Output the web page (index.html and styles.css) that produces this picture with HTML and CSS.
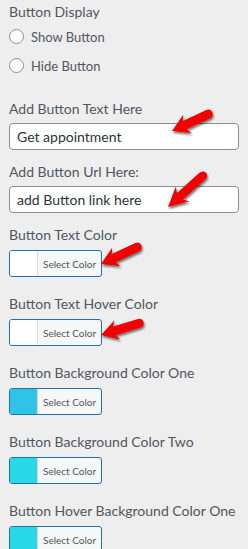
FILE: index.html
```html
<html>
  <head>
    <meta charset="UTF-8" />
    <meta name="viewport" content="width=device-width, initial-scale=1.0" />
    <title>Button Settings</title>
    <link rel="stylesheet" href="styles.css">
  </head>
  <body>
    <div class="panel">
      <div class="group">
        <label class="title">Button Display</label>
        <label class="radio"><input type="radio" name="display" /> Show Button</label>
        <label class="radio"><input type="radio" name="display" /> Hide Button</label>
      </div>

      <div class="field">
        <label class="title" for="btn_text">Add Button Text Here</label>
        <input class="text" type="text" id="btn_text" value="Get appointment" />
      </div>
      <div class="field">
        <label class="title" for="btn_url">Add Button Url Here:</label>
        <input class="text" type="text" id="btn_url" value="add Button link here" />
      </div>

      <div class="color-field">
        <label class="title">Button Text Color</label>
        <button class="color-btn"><span class="swatch"></span><span class="pick">Select Color</span></button>
      </div>
      <div class="color-field">
        <label class="title">Button Text Hover Color</label>
        <button class="color-btn"><span class="swatch"></span><span class="pick">Select Color</span></button>
      </div>
      <div class="color-field">
        <label class="title">Button Background Color One</label>
        <button class="color-btn"><span class="swatch" style="background: #31c3e5"></span><span class="pick">Select Color</span></button>
      </div>
      <div class="color-field">
        <label class="title">Button Background Color Two</label>
        <button class="color-btn"><span class="swatch" style="background: #28d8e6"></span><span class="pick">Select Color</span></button>
      </div>
      <div class="color-field">
        <label class="title">Button Hover Background Color One</label>
        <button class="color-btn"><span class="swatch" style="background: #28d8e6"></span><span class="pick">Select Color</span></button>
      </div>
    </div>

    <!-- red pointer arrows drawn over the form -->
    <svg class="arrows" width="248" height="549" viewBox="0 0 248 549">
      <defs>
        <filter id="shadow" x="-30%" y="-30%" width="160%" height="160%">
          <feDropShadow dx="1" dy="2" stdDeviation="1.2" flood-color="#000" flood-opacity="0.55" />
        </filter>
        <path id="arrow" d="M0,0 L17,-10 L14,-4.5 L40,-4.5 A4.5,4.5 0 0 1 40,4.5 L14,4.5 L17,10 Z" />
      </defs>
      <g fill="#f20000" filter="url(#shadow)">
        <use href="#arrow" transform="translate(172,131) rotate(-25)" />
        <use href="#arrow" transform="translate(168,207) rotate(-42) scale(1.15,1)" />
        <use href="#arrow" transform="translate(101,264) rotate(-25)" />
        <use href="#arrow" transform="translate(101,335) rotate(-17)" />
      </g>
    </svg>
  </body>
</html>
```

FILE: styles.css
```css
body {
  margin: 0;
  background-color: #eeeeee;
  font-family: Lato, "Liberation Sans", sans-serif;
  color: #50575e;
  position: relative;
}
.panel {
  padding: 2px 9px 0 9px;
}
.title {
  display: block;
  font-size: 14px;
  line-height: 20px;
}
.group {
  margin-bottom: 19px;
}
.radio {
  display: flex;
  align-items: center;
  height: 29px;
  font-size: 13px;
  gap: 7px;
}
.radio input {
  appearance: none;
  margin: 0 0 0 0;
  width: 15px;
  height: 15px;
  border: 1px solid #8c8f94;
  border-radius: 50%;
  background: #fff;
}
.field .title {
  margin-bottom: 4px;
}
.text {
  box-sizing: border-box;
  display: block;
  width: 230px;
  height: 27px;
  margin-bottom: 12px;
  padding: 0 7px;
  border: 1px solid #8c8f94;
  border-radius: 4px;
  background: #fff;
  font-family: Lato, "Liberation Sans", sans-serif;
  font-size: 14px;
  color: #2c3338;
}
.color-field {
  margin-bottom: 17px;
}
.color-field .title {
  margin-bottom: 5px;
}
.color-btn {
  display: flex;
  box-sizing: border-box;
  width: 93px;
  height: 27px;
  padding: 0;
  border: 1px solid #2271b1;
  border-radius: 3px;
  background: #f6f7f7;
  overflow: hidden;
}
.swatch {
  flex: none;
  width: 27px;
  height: 100%;
  background: #fff;
  border-right: 1px solid #dcdcde;
}
.pick {
  flex: 1;
  display: flex;
  align-items: center;
  height: 100%;
  padding-left: 5px;
  white-space: nowrap;
  font-family: Lato, "Liberation Sans", sans-serif;
  font-size: 10px;
  color: #50575e;
}
.arrows {
  position: absolute;
  left: 0;
  top: 0;
  pointer-events: none;
}
```
